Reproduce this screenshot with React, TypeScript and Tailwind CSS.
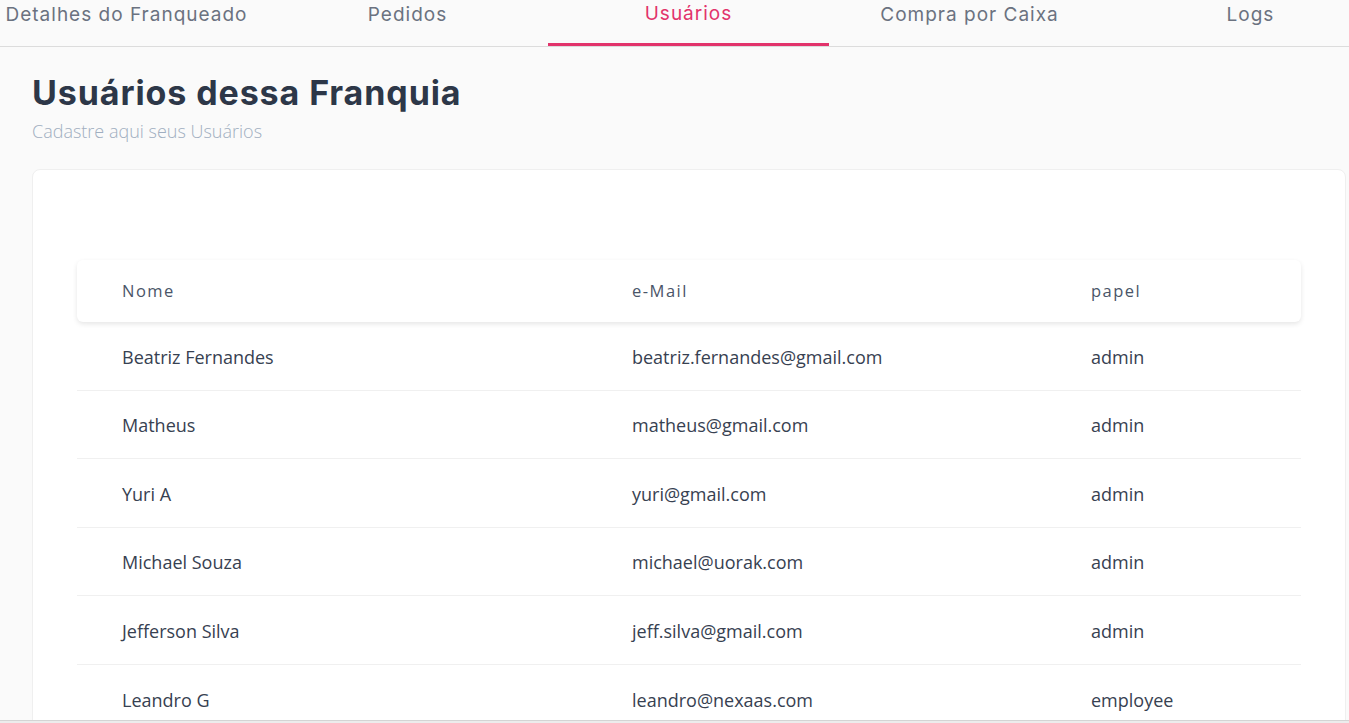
import React from 'react';

const tabs = ['Detalhes do Franqueado', 'Pedidos', 'Usuários', 'Compra por Caixa', 'Logs'];

const users = [
    { name: 'Beatriz Fernandes', email: 'beatriz.fernandes@gmail.com', role: 'admin' },
    { name: 'Matheus', email: 'matheus@gmail.com', role: 'admin' },
    { name: 'Yuri A', email: 'yuri@gmail.com', role: 'admin' },
    { name: 'Michael Souza', email: 'michael@uorak.com', role: 'admin' },
    { name: 'Jefferson Silva', email: 'jeff.silva@gmail.com', role: 'admin' },
    { name: 'Leandro G', email: 'leandro@nexaas.com', role: 'employee' },
];

export default function App() {
    const active = 'Usuários';

    return (
        <div className="h-[723px] overflow-hidden bg-[#ececec] font-['Open_Sans',sans-serif]">
            <div className="h-[721px] overflow-hidden bg-[#fafafa] border-b border-[#d4d4d4]">
                {/* Tabs */}
                <div className="overflow-hidden border-b border-[#dcdcdc]">
                    <div className="flex -ml-[14px] w-max">
                        {tabs.map((t) => (
                            <div
                                key={t}
                                className={`w-[281px] h-[46px] flex justify-center font-['Inter',sans-serif] text-[19px] tracking-[1px] ${
                                    t === active
                                        ? 'text-[#e2336b] border-b-[3px] border-[#e2336b]'
                                        : 'text-[#6b7280] pt-[1px]'
                                }`}
                            >
                                {t}
                            </div>
                        ))}
                    </div>
                </div>

                {/* Heading */}
                <div className="pl-8 pt-[24px]">
                    <h1 className="font-['Inter',sans-serif] font-bold text-[34px] tracking-[0.9px] leading-[44px] text-[#2d3748]">
                        Usuários dessa Franquia
                    </h1>
                    <p className="text-[18px] font-light text-[#a0aec0] mt-[3px]">Cadastre aqui seus Usuários</p>
                </div>

                {/* Card */}
                <div className="ml-8 mr-[3px] mt-[24px] bg-white rounded-lg border border-[#efefef] pt-[90px] px-[44px] h-[600px]">
                    <div className="grid grid-cols-[510px_459px_1fr] items-center h-[62px] bg-white rounded-md shadow-[0_2px_5px_rgba(0,0,0,0.1)] text-[16.5px] tracking-[1.5px] text-[#4a5568]">
                        <div className="pl-[45px]">Nome</div>
                        <div className="pl-[45px]">e-Mail</div>
                        <div className="pl-[45px]">papel</div>
                    </div>
                    {users.map((u, i) => (
                        <div
                            key={u.email}
                            className={`grid grid-cols-[510px_459px_1fr] items-center h-[68.5px] pt-[3px] text-[18px] text-[#374151] ${
                                i < users.length - 1 ? 'border-b border-[#f0f0f0]' : ''
                            }`}
                        >
                            <div className="pl-[45px]">{u.name}</div>
                            <div className="pl-[45px]">{u.email}</div>
                            <div className="pl-[45px]">{u.role}</div>
                        </div>
                    ))}
                </div>
            </div>
        </div>
    );
}
